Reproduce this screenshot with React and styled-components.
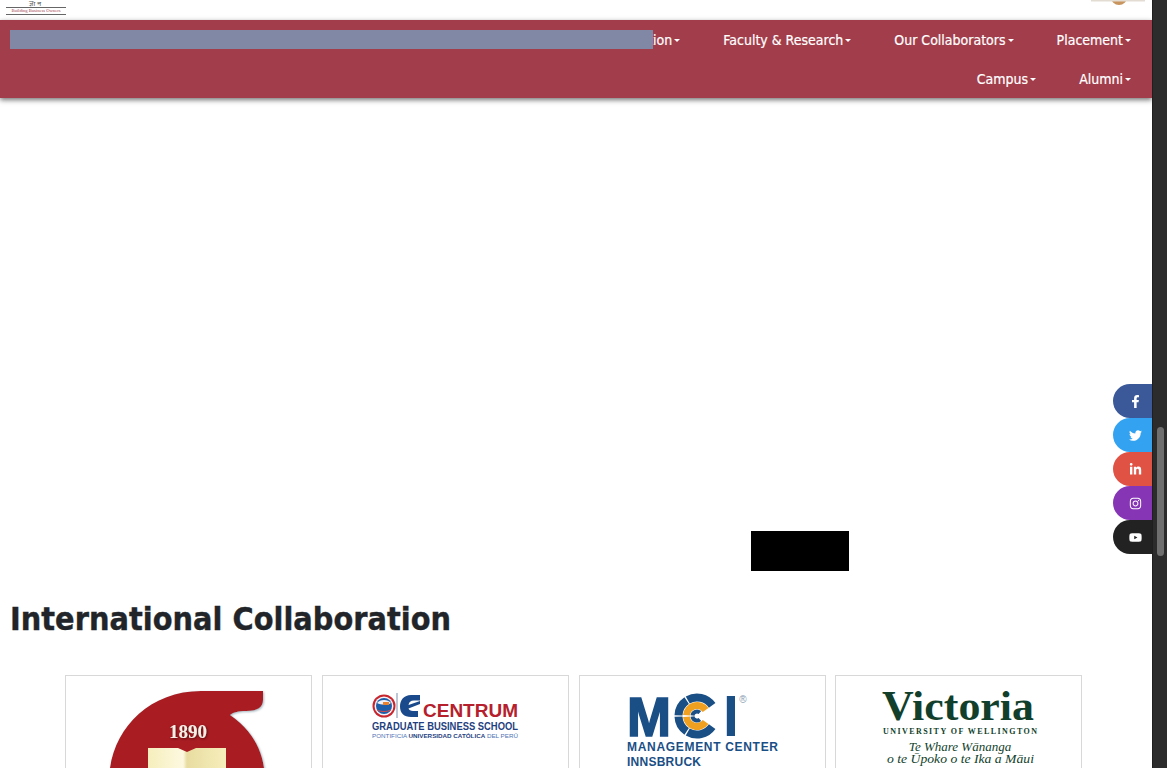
import React from "react";
import styled, { createGlobalStyle } from "styled-components";
import { FaFacebookF, FaTwitter, FaLinkedinIn, FaInstagram, FaYoutube } from "react-icons/fa";

const GlobalStyle = createGlobalStyle`
  html, body {
    margin: 0;
    padding: 0;
    height: 100%;
    overflow: hidden;
    background: #fff;
  }
`;

const Page = styled.div`
  display: flex;
  width: 1167px;
  height: 768px;
  overflow: hidden;
  position: relative;
  font-family: "DejaVu Sans", sans-serif;
`;

const Main = styled.div`
  flex: 1;
  min-width: 0;
  overflow: hidden;
  background: #fff;
`;

const Scrollbar = styled.div`
  width: 15px;
  flex-shrink: 0;
  box-sizing: border-box;
  padding: 427px 3px 0 4px;
  background: #2c2c2c;
  border-left: 1px solid #1f1f1f;
`;

const Thumb = styled.div`
  height: 129px;
  border-radius: 4px;
  background: #6f6f6f;
`;

const TopBar = styled.div`
  height: 20px;
  display: flex;
  justify-content: space-between;
  padding: 0 7px 0 6px;
  overflow: hidden;
`;

const TinyLogo = styled.div`
  width: 60px;
  height: 14.5px;
  display: flex;
  flex-direction: column;
  align-items: center;
  justify-content: flex-end;
`;

const TinyScript = styled.div`
  font-family: "Noto Sans", "DejaVu Sans", sans-serif;
  font-size: 7px;
  line-height: 6px;
  color: #555;
  letter-spacing: 2px;
  white-space: nowrap;
`;

const TinySlogan = styled.div`
  width: 100%;
  box-sizing: border-box;
  border-top: 1px solid #666;
  border-bottom: 1px solid #666;
  font-family: "Liberation Serif", serif;
  font-size: 4.6px;
  line-height: 6px;
  color: #a23d4b;
  text-align: center;
  white-space: nowrap;
`;

const Nav = styled.nav`
  position: relative;
  height: 78px;
  box-sizing: border-box;
  padding: 0 21px 0 0;
  background: #a23d4b;
  box-shadow: 0 2px 5px rgba(0, 0, 0, 0.55);
  display: flex;
  flex-direction: column;
`;

const NavRow = styled.div`
  height: 39px;
  display: flex;
  justify-content: flex-end;
  align-items: center;
  gap: 43px;
`;

const NavItem = styled.a`
  display: flex;
  align-items: center;
  gap: 2px;
  color: #fff;
  font-family: "DejaVu Sans Condensed", "DejaVu Sans", sans-serif;
  font-stretch: condensed;
  font-size: 14px;
  -webkit-text-stroke: 0.2px #fff;
  white-space: nowrap;
`;

const Caret = styled.span`
  width: 0;
  height: 0;
  border-left: 3px solid transparent;
  border-right: 3px solid transparent;
  border-top: 3px solid #fff;
  margin-top: 1px;
`;

const Redaction = styled.div`
  position: absolute;
  left: 10px;
  top: 10px;
  width: 643px;
  height: 19px;
  background: #8088a6;
`;

const Hero = styled.section`
  position: relative;
  height: 472px;
`;

const BlackBox = styled.div`
  position: absolute;
  left: 751px;
  top: 433px;
  width: 98px;
  height: 40px;
  background: #000;
`;

const Heading = styled.h2`
  margin: 0;
  padding: 30px 0 0 10px;
  height: 105px;
  box-sizing: border-box;
  font-family: "DejaVu Sans Condensed", "DejaVu Sans", sans-serif;
  font-stretch: condensed;
  font-weight: 700;
  font-size: 32px;
  line-height: 38px;
  letter-spacing: 0.05px;
  color: #212529;
  -webkit-text-stroke: 0.4px #212529;
  white-space: nowrap;
`;

const Cards = styled.div`
  display: grid;
  grid-template-columns: repeat(4, 247px);
  column-gap: 9.75px;
  padding-left: 65px;
`;

const Card = styled.div`
  height: 200px;
  border: 1px solid #d8d8d8;
  background: #fff;
  box-sizing: border-box;
`;

const LogoSvg = styled.svg`
  display: block;
  width: 245px;
  height: 120px;
`;

const Social = styled.div`
  position: absolute;
  right: 15px;
  top: 384px;
  display: flex;
  flex-direction: column;
`;

const SocialLink = styled.a`
  width: 39px;
  height: 34px;
  box-sizing: border-box;
  padding: 1px 0 0 5px;
  display: flex;
  align-items: center;
  justify-content: center;
  border-radius: 17px 0 0 17px;
  color: #fff;
  font-size: 13px;
  background: ${(p) => p.$bg};
`;

const arc = (cx, cy, r, a0, a1) => {
  const rad = (a) => (a * Math.PI) / 180;
  const x0 = cx + r * Math.cos(rad(a0));
  const y0 = cy + r * Math.sin(rad(a0));
  const x1 = cx + r * Math.cos(rad(a1));
  const y1 = cy + r * Math.sin(rad(a1));
  return `M${x0} ${y0} A${r} ${r} 0 ${a1 - a0 > 180 ? 1 : 0} 1 ${x1} ${y1}`;
};

const LogoBook = () => (
  <LogoSvg viewBox="0 0 245 120">
    <defs>
      <filter id="tailShadow" x="-10%" y="-10%" width="120%" height="120%">
        <feDropShadow dx="1" dy="1" stdDeviation="1.2" floodColor="#7f9aa5" floodOpacity="0.7" />
      </filter>
      <filter id="yearShadow" x="-20%" y="-20%" width="140%" height="140%">
        <feDropShadow dx="0.8" dy="0.8" stdDeviation="0.8" floodColor="#3a0808" floodOpacity="0.8" />
      </filter>
      <linearGradient id="page" x1="0" x2="1" y1="0" y2="0">
        <stop offset="0" stopColor="#f6eebc" />
        <stop offset="0.45" stopColor="#fdf9e0" />
        <stop offset="0.5" stopColor="#e8dca0" />
        <stop offset="1" stopColor="#f6eebc" />
      </linearGradient>
    </defs>
    <path
      d="M44 92 C50 50 85 15 135 15 L197 15 L197 24 C197 32 190 35 180 35 C172 35 168 36 164 39 C183 52 195 70 198 92 L198 120 L44 120 Z"
      fill="#a81f22"
      filter="url(#tailShadow)"
    />
    <text x="122" y="62" textAnchor="middle" fontFamily="Liberation Serif, serif" fontWeight="700" fontSize="19" fill="#f6efe6" filter="url(#yearShadow)">
      1890
    </text>
    <path d="M82 72 L112 72 L121 76 L130 72 L160 72 L160 120 L82 120 Z" fill="url(#page)" />
  </LogoSvg>
);

const LogoCentrum = () => (
  <LogoSvg viewBox="0 0 245 120">
    <circle cx="61" cy="30" r="11.5" fill="#c8262e" />
    <circle cx="61" cy="30" r="9.5" fill="#f3f3f6" />
    <circle cx="61" cy="30" r="8" fill="#1c5fa8" />
    <path d="M54 27 C57 23 65 23 68 27 C65 29 58 29 54 27 Z" fill="#eef1f7" />
    <rect x="60" y="26" width="6" height="3" fill="#e8822c" />
    <path d="M54 34 C58 36 64 36 68 34" stroke="#d94a4a" strokeWidth="1" fill="none" />
    <rect x="73.5" y="17" width="1" height="25" fill="#7f8fae" />
    <path d="M97 19 H88 C81 19 77 24 77 30.5 C77 37 81 41 88 41 H95 V35 H90 C87.5 35 86 34 85.5 32.5 L97 28 V25 L85.5 29 C86 26 87.5 24.5 91 24.5 H97 Z" fill="#1b4a8c" />
    <text x="100" y="41" fontFamily="Liberation Sans, sans-serif" fontWeight="700" fontSize="18" fill="#b5202c" textLength="95" lengthAdjust="spacingAndGlyphs">
      CENTRUM
    </text>
    <text x="49" y="53.5" fontFamily="Liberation Sans, sans-serif" fontWeight="700" fontSize="10.5" fill="#1f3f80" textLength="146" lengthAdjust="spacingAndGlyphs">
      GRADUATE BUSINESS SCHOOL
    </text>
    <text x="49" y="62" fontFamily="Liberation Sans, sans-serif" fontSize="5.6" fill="#4f74b5" textLength="146" lengthAdjust="spacingAndGlyphs">
      PONTIFICIA <tspan fontWeight="700" fill="#1f3f80">UNIVERSIDAD CATÓLICA</tspan> DEL PERÚ
    </text>
  </LogoSvg>
);

const LogoMci = () => (
  <LogoSvg viewBox="0 0 245 120">
    <g fontFamily="Liberation Sans, sans-serif" fontWeight="700" fill="#1a4f86">
      <text x="47" y="59.5" fontSize="55" textLength="44" lengthAdjust="spacingAndGlyphs" stroke="#1a4f86" strokeWidth="1.6">M</text>
      <text x="151" y="60" fontSize="57" textAnchor="middle">I</text>
      <text x="47" y="75" fontSize="12" textLength="151" lengthAdjust="spacing">MANAGEMENT CENTER</text>
      <text x="47" y="90" fontSize="12" textLength="74" lengthAdjust="spacing">INNSBRUCK</text>
    </g>
    <g fill="none" strokeLinecap="butt">
      <path d={arc(117, 40, 18.5, 35, 120)} stroke="#1a4f86" strokeWidth="8" />
      <path d={arc(117, 40, 18.5, 124, 178)} stroke="#1a4f86" strokeWidth="8" />
      <path d={arc(117, 40, 18.5, 182, 236)} stroke="#1a4f86" strokeWidth="8" />
      <path d={arc(117, 40, 18.5, 240, 325)} stroke="#1a4f86" strokeWidth="8" />
      <path d={arc(117, 40, 10.5, 35, 176)} stroke="#f0a020" strokeWidth="7" />
      <path d={arc(117, 40, 10.5, 184, 325)} stroke="#f0a020" strokeWidth="7" />
      <path d={arc(117, 40, 4.5, 50, 174)} stroke="#1a4f86" strokeWidth="4" />
      <path d={arc(117, 40, 4.5, 186, 310)} stroke="#1a4f86" strokeWidth="4" />
    </g>
    <text x="163" y="27" textAnchor="middle" fontFamily="Liberation Sans, sans-serif" fontSize="10" fill="#8a9bb0">®</text>
  </LogoSvg>
);

const LogoVictoria = () => (
  <LogoSvg viewBox="0 0 245 120">
    <g fontFamily="Liberation Serif, serif" fill="#123f2c">
      <text x="46" y="44" fontSize="42" fontWeight="700" textLength="152" lengthAdjust="spacingAndGlyphs">Victoria</text>
      <text x="47" y="58" fontSize="8" fontWeight="700" textLength="154" lengthAdjust="spacing">UNIVERSITY OF WELLINGTON</text>
      <text x="124" y="75" fontSize="13" fontStyle="italic" textAnchor="middle">Te Whare Wānanga</text>
      <text x="51" y="87" fontSize="13" fontStyle="italic" textLength="147" lengthAdjust="spacingAndGlyphs">o te Ūpoko o te Ika a Māui</text>
    </g>
  </LogoSvg>
);

export default function App() {
  return (
    <Page>
      <GlobalStyle />
      <Main>
        <TopBar>
          <TinyLogo>
            <TinyScript>ज्ञान</TinyScript>
            <TinySlogan>Building Business Owners</TinySlogan>
          </TinyLogo>
          <svg width="54" height="8" viewBox="0 0 54 8">
            <circle cx="28" cy="-3" r="8" fill="#c9955f" />
            <rect x="0" y="0" width="54" height="1.5" fill="#e3dcd2" />
          </svg>
        </TopBar>
        <Nav>
          <Redaction />
          <NavRow>
            <NavItem>Education<Caret /></NavItem>
            <NavItem>Faculty &amp; Research<Caret /></NavItem>
            <NavItem>Our Collaborators<Caret /></NavItem>
            <NavItem>Placement<Caret /></NavItem>
          </NavRow>
          <NavRow>
            <NavItem>Campus<Caret /></NavItem>
            <NavItem>Alumni<Caret /></NavItem>
          </NavRow>
        </Nav>
        <Hero>
          <BlackBox />
        </Hero>
        <Heading>International Collaboration</Heading>
        <Cards>
          <Card><LogoBook /></Card>
          <Card><LogoCentrum /></Card>
          <Card><LogoMci /></Card>
          <Card><LogoVictoria /></Card>
        </Cards>
      </Main>
      <Scrollbar>
        <Thumb />
      </Scrollbar>
      <Social>
        <SocialLink $bg="#3b5998"><FaFacebookF /></SocialLink>
        <SocialLink $bg="#33a3f1"><FaTwitter /></SocialLink>
        <SocialLink $bg="#e05244"><FaLinkedinIn /></SocialLink>
        <SocialLink $bg="#8636b4"><FaInstagram /></SocialLink>
        <SocialLink $bg="#222222"><FaYoutube /></SocialLink>
      </Social>
    </Page>
  );
}
